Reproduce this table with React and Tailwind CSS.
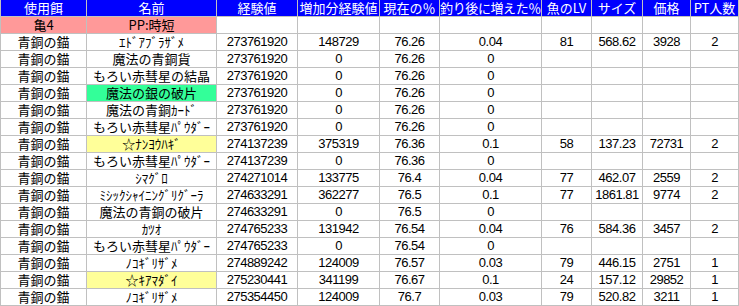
import React from 'react';

const HEADERS = ['使用餌', '名前', '経験値', '増加分経験値', '現在の％', '釣り後に増えた％', '魚のLV', 'サイズ', '価格', 'PT人数'];

// [name, nameBg, exp, gain, pct, inc, lv, size, price, pt]
const ROWS = [
  ['ｴﾄﾞｱﾌﾞﾗｻﾞﾒ', '', '273761920', '148729', '76.26', '0.04', '81', '568.62', '3928', '2'],
  ['魔法の青銅貨', '', '273761920', '0', '76.26', '0', '', '', '', ''],
  ['もろい赤彗星の結晶', '', '273761920', '0', '76.26', '0', '', '', '', ''],
  ['魔法の銀の破片', 'green', '273761920', '0', '76.26', '0', '', '', '', ''],
  ['魔法の青銅ｶｰﾄﾞ', '', '273761920', '0', '76.26', '0', '', '', '', ''],
  ['もろい赤彗星ﾊﾟｳﾀﾞｰ', '', '273761920', '0', '76.26', '0', '', '', '', ''],
  ['☆ﾅﾝﾖｳﾊｷﾞ', 'yellow', '274137239', '375319', '76.36', '0.1', '58', '137.23', '72731', '2'],
  ['もろい赤彗星ﾊﾟｳﾀﾞｰ', '', '274137239', '0', '76.36', '0', '', '', '', ''],
  ['ｼﾏｸﾞﾛ', '', '274271014', '133775', '76.4', '0.04', '77', '462.07', '2559', '2'],
  ['ﾐｼｯｸｼｬｲﾆﾝｸﾞﾘｸﾞｰﾗ', '', '274633291', '362277', '76.5', '0.1', '77', '1861.81', '9774', '2'],
  ['魔法の青銅の破片', '', '274633291', '0', '76.5', '0', '', '', '', ''],
  ['ｶﾂｵ', '', '274765233', '131942', '76.54', '0.04', '76', '584.36', '3457', '2'],
  ['もろい赤彗星ﾊﾟｳﾀﾞｰ', '', '274765233', '0', '76.54', '0', '', '', '', ''],
  ['ﾉｺｷﾞﾘｻﾞﾒ', '', '274889242', '124009', '76.57', '0.03', '79', '446.15', '2751', '1'],
  ['☆ｷｱﾏﾀﾞｲ', 'yellow', '275230441', '341199', '76.67', '0.1', '24', '157.12', '29852', '1'],
  ['ﾉｺｷﾞﾘｻﾞﾒ', '', '275354450', '124009', '76.7', '0.03', '79', '520.82', '3211', '1'],
];

const jp = { fontFamily: '"MS PGothic", "Noto Sans CJK JP", sans-serif' };
const num = { fontFamily: '"Liberation Sans", Arial, sans-serif' };

const nameBg = {
  '': 'bg-white',
  green: 'bg-[#33ff99]',
  yellow: 'bg-[#ffff99]',
};

function Cell({ children, className = 'bg-white', font = 'num' }) {
  return (
    <div
      className={`${className} h-4 flex items-center justify-center whitespace-nowrap leading-4 ${
        font === 'jp' ? 'text-[13px] text-black' : 'text-[13px] tracking-[-0.5px] text-black'
      }`}
      style={font === 'jp' ? jp : num}
    >
      {children}
    </div>
  );
}

export default function App() {
  return (
    <div className="w-[739px] h-[306px] bg-white">
      <div className="grid grid-cols-[85px_129px_80px_81px_59px_101px_49px_50px_47px_47px] auto-rows-[16px] gap-px bg-[#c0c0c0] pl-px pr-px pb-px">
        {HEADERS.map((h, i) => (
          <div
            key={h}
            className={`bg-[#0000ff] h-4 flex items-center justify-center whitespace-nowrap text-white leading-4 ${
              i === 5 ? 'text-[13px] tracking-[-0.4px]' : 'text-[13px]'
            }`}
            style={jp}
          >
            {h}
          </div>
        ))}

        <Cell className="bg-[#ff9999]" font="jp">亀4</Cell>
        <Cell className="bg-[#ff9999]" font="jp">PP:時短</Cell>
        {Array.from({ length: 8 }).map((_, i) => (
          <Cell key={i} />
        ))}

        {ROWS.map((r, ri) => (
          <React.Fragment key={ri}>
            <Cell font="jp">青銅の錨</Cell>
            <Cell className={nameBg[r[1]]} font="jp">{r[0]}</Cell>
            {r.slice(2).map((v, ci) => (
              <Cell key={ci}>{v}</Cell>
            ))}
          </React.Fragment>
        ))}
      </div>
    </div>
  );
}
